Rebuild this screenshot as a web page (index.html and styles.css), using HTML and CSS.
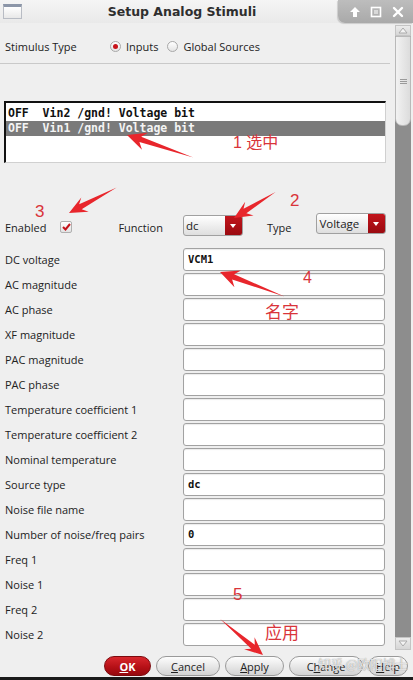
FILE: index.html
```html
<!DOCTYPE html>
<html lang="en">
<head>
  <meta charset="UTF-8" />
  <title>Setup Analog Stimuli</title>
  <link rel="stylesheet" href="styles.css">
</head>
<body>

<div class="window">
  <div class="titlebar">
    <div class="win-icon"></div>
    <div class="title">Setup Analog Stimuli</div>
    <div class="win-controls">
      <svg width="12" height="12" viewBox="0 0 12 12"><path d="M6 1 L11 6 H8 V11 H4 V6 H1 Z" fill="#fff"/></svg>
      <svg width="12" height="12" viewBox="0 0 12 12"><rect x="1.5" y="1.5" width="9" height="9" fill="none" stroke="#fff" stroke-width="1.6"/><rect x="4" y="4" width="4" height="4" fill="#fff" opacity="0.5"/></svg>
      <svg width="12" height="12" viewBox="0 0 12 12"><path d="M2 2 L10 10 M10 2 L2 10" stroke="#fff" stroke-width="2.4" stroke-linecap="round"/></svg>
    </div>
  </div>

  <div class="body">
    <div class="content">
      <div class="stim-row">
        <span class="stim-label">Stimulus Type</span>
        <span class="radio on"></span><span class="radio-text">Inputs</span>
        <span class="radio"></span><span class="radio-text">Global Sources</span>
      </div>
      <div class="sep"></div>

      <div class="list">
        <div class="list-row">OFF  Vin2 /gnd! Voltage bit</div>
        <div class="list-row sel">OFF  Vin1 /gnd! Voltage bit</div>
      </div>

      <div class="func-row">
        <span class="flabel">Enabled</span>
        <span class="check">
          <svg width="9" height="8" viewBox="0 0 9 8"><path d="M1 4 L3.5 6.5 L8 1" fill="none" stroke="#c4141c" stroke-width="2"/></svg>
        </span>
        <span class="flabel fn">Function</span>
        <span class="combo combo-dc"><span class="combo-val">dc</span><span class="combo-btn"></span></span>
        <span class="flabel ty">Type</span>
        <span class="combo combo-ty"><span class="combo-val">Voltage</span><span class="combo-btn"></span></span>
      </div>

      <div class="fields">
        <label>DC voltage</label><div class="field">VCM1</div>
        <label>AC magnitude</label><div class="field"></div>
        <label>AC phase</label><div class="field"></div>
        <label>XF magnitude</label><div class="field"></div>
        <label>PAC magnitude</label><div class="field"></div>
        <label>PAC phase</label><div class="field"></div>
        <label>Temperature coefficient 1</label><div class="field"></div>
        <label>Temperature coefficient 2</label><div class="field"></div>
        <label>Nominal temperature</label><div class="field"></div>
        <label>Source type</label><div class="field">dc</div>
        <label>Noise file name</label><div class="field"></div>
        <label>Number of noise/freq pairs</label><div class="field">0</div>
        <label>Freq 1</label><div class="field"></div>
        <label>Noise 1</label><div class="field"></div>
        <label>Freq 2</label><div class="field"></div>
        <label>Noise 2</label><div class="field"></div>
      </div>
    </div>

    <div class="scrollbar">
      <div class="sb-arrow up"><svg width="10" height="7" viewBox="0 0 10 7"><path d="M1 6 L5 1 L9 6 Z" fill="#f4f4f4" stroke="#aaa"/></svg></div>
      <div class="sb-thumb"><span></span><span></span><span></span></div>
      <div class="sb-track"></div>
      <div class="sb-arrow down"><svg width="10" height="7" viewBox="0 0 10 7"><path d="M1 1 L5 6 L9 1 Z" fill="#f4f4f4" stroke="#aaa"/></svg></div>
    </div>
  </div>

  <div class="footer">
    <button class="btn ok"><u>O</u>K</button>
    <button class="btn"><u>C</u>ancel</button>
    <button class="btn"><u>A</u>pply</button>
    <button class="btn">C<u>h</u>ange</button>
    <button class="btn"><u>H</u>elp</button>
  </div>
  <div class="bottom-edge"></div>

  <!-- red annotations drawn over the dialog -->
  <svg class="arrows" width="413" height="680" viewBox="0 0 413 680">
    <g fill="#e8262c">
      <path transform="translate(127 135) rotate(199.2)" d="M0 0 L-19 -9 L-14 -2.5 L-70 0.5 L-14 3 L-19 9 Z"/>
      <path transform="translate(234 218) rotate(148.6)" d="M0 0 L-18 -8 L-13 -2.5 L-49 0.5 L-13 3 L-18 8 Z"/>
      <path transform="translate(69 213) rotate(152.5)" d="M0 0 L-18 -8 L-13 -2.5 L-54 0.5 L-13 3 L-18 8 Z"/>
      <path transform="translate(220 272) rotate(201.3)" d="M0 0 L-19 -9 L-14 -2.5 L-69 0.5 L-14 3 L-19 9 Z"/>
      <path transform="translate(263 655) rotate(40.6)" d="M0 0 L-18 -8 L-13 -2.5 L-56 0.5 L-13 3 L-18 8 Z"/>
    </g>
  </svg>
  <span class="note n1">1 选中</span>
  <span class="note n2">2</span>
  <span class="note n3">3</span>
  <span class="note n4">4</span>
  <span class="note n5">名字</span>
  <span class="note n6">5</span>
  <span class="note n7">应用</span>
  <span class="watermark">知乎 @欧阳博士</span>
</div>

</body>
</html>
```

FILE: styles.css
```css
* {
  margin: 0;
  padding: 0;
  box-sizing: border-box;
}

body {
  width: 413px;
  height: 680px;
  overflow: hidden;
  background: #efefef;
  font-family: 'Open Sans', 'Noto Sans CJK SC', sans-serif;
  font-size: 11px;
  color: #222;
}

.window {
  position: relative;
  width: 413px;
  height: 680px;
  display: flex;
  flex-direction: column;
  background: #efefef;
}

/* title bar */
.titlebar {
  height: 23px;
  display: flex;
  align-items: stretch;
  background: linear-gradient(#f5f5f5, #e9e9e9);
}

.win-icon {
  width: 19px;
  height: 15px;
  margin: 4px 4px 0 3px;
  border: 1px solid #b8bcc4;
  border-top: 3px solid #8c96a8;
  background: linear-gradient(#ffffff, #e8e8e8);
}

.title {
  flex: 1;
  text-align: center;
  font-family: 'DejaVu Sans', sans-serif;
  font-weight: bold;
  font-size: 12.5px;
  line-height: 24px;
  color: #2e2e2e;
}

.win-controls {
  width: 75px;
  display: flex;
  align-items: center;
  justify-content: space-around;
  padding: 0 4px 0 6px;
  background: linear-gradient(#bdbdbd, #a9a9a9);
  border-bottom-left-radius: 7px;
  box-shadow: -1px 1px 1px rgba(0,0,0,0.15);
}

/* main area */
.body {
  height: 628px;
  display: flex;
}

.content {
  flex: 1;
  padding-top: 12px;
  overflow: hidden;
}

.stim-row {
  height: 22px;
  display: flex;
  align-items: center;
  padding-left: 5px;
}

.stim-label {
  width: 105px;
}

.radio {
  width: 11px;
  height: 11px;
  border-radius: 50%;
  border: 1px solid #a8a8a8;
  background: linear-gradient(#ffffff, #e4e4e4);
  position: relative;
}

.radio.on::after {
  content: "";
  position: absolute;
  left: 2px;
  top: 2px;
  width: 5px;
  height: 5px;
  border-radius: 50%;
  background: #c8141b;
}

.radio-text {
  margin: 0 9px 0 5px;
}

.sep {
  height: 1px;
  margin-top: 6px;
  margin-right: 3px;
  background: #c9c9c9;
}

.list {
  height: 62px;
  margin: 37px 7px 0 4px;
  padding-top: 3px;
  background: #fff;
  border-top: 2px solid #111;
  border-left: 2px solid #111;
  border-right: 1px solid #d0d0d0;
  border-bottom: 1px solid #d0d0d0;
}

.list-row {
  height: 15px;
  line-height: 15px;
  padding-left: 2px;
  white-space: pre;
  font-family: 'DejaVu Sans Mono', monospace;
  font-weight: bold;
  font-size: 11.5px;
  color: #111;
}

.list-row.sel {
  background: #7a7a7a;
  color: #f4f4f4;
}

.func-row {
  height: 24px;
  margin-top: 49px;
  display: flex;
  align-items: center;
  padding-left: 5px;
}

.flabel {
  padding-top: 7px;
}

.check {
  width: 12px;
  height: 12px;
  margin: 0 0 0 14px;
  border: 1px solid #b0b0b0;
  border-radius: 2px;
  background: linear-gradient(#ffffff, #e2e2e2);
  display: flex;
  align-items: center;
  justify-content: center;
  position: relative;
  top: 3px;
}

.fn {
  margin-left: 46px;
}

.combo {
  height: 21px;
  display: flex;
  border: 1px solid #a0a0a0;
  border-radius: 3px;
  background: linear-gradient(#ffffff, #dedede);
  overflow: hidden;
}

.combo-dc {
  width: 60px;
  margin-left: 20px;
  position: relative;
  top: 1px;
}

.combo-ty {
  width: 70px;
  margin-left: 25px;
  position: relative;
  top: -1px;
}

.combo-val {
  flex: 1;
  padding: 1px 0 0 2px;
  font-size: 11.5px;
  line-height: 17px;
}

.combo-btn {
  width: 17px;
  background: linear-gradient(#c2151c, #9a0a10);
  position: relative;
}

.combo-btn::after {
  content: "";
  position: absolute;
  left: 5px;
  top: 8px;
  border-left: 3.5px solid transparent;
  border-right: 3.5px solid transparent;
  border-top: 4px solid #fff;
}

.ty {
  margin-left: 24px;
}

.fields {
  margin-top: 12px;
  padding-left: 5px;
  display: grid;
  grid-template-columns: 178px 202px;
  grid-auto-rows: 23px;
  row-gap: 2px;
}

.fields label {
  display: flex;
  align-items: center;
}

.field {
  border: 1px solid #a2a2a2;
  border-radius: 3px;
  background: #fff;
  box-shadow: inset 0 1px 1px rgba(0,0,0,0.08);
  padding: 0 0 0 4px;
  font-family: 'DejaVu Sans Mono', monospace;
  font-weight: bold;
  font-size: 10.5px;
  line-height: 21px;
  color: #111;
}

/* scrollbar */
.scrollbar {
  width: 16px;
  margin: 2px 2px 1px 2px;
  display: flex;
  flex-direction: column;
  background: #8d8d8d;
}

.sb-arrow {
  height: 11px;
  background: linear-gradient(#ececec, #d6d6d6);
  border: 1px solid #c4c4c4;
  display: flex;
  align-items: center;
  justify-content: center;
}

.sb-arrow.down {
  height: 13px;
}

.sb-thumb {
  height: 90px;
  background: linear-gradient(90deg, #f2f2f2, #dcdcdc);
  border: 1px solid #b9b9b9;
  border-radius: 0 0 7px 7px;
  display: flex;
  flex-direction: column;
  align-items: center;
  justify-content: center;
  gap: 1px;
}

.sb-thumb span {
  width: 7px;
  height: 1px;
  background: #9a9a9a;
}

.sb-track {
  flex: 1;
}

/* buttons */
.footer {
  height: 26px;
  display: flex;
  justify-content: flex-end;
  align-items: flex-start;
  gap: 5px;
  padding: 5px 5px 0 0;
}

.btn {
  height: 20px;
  padding: 0 14px;
  border: 1px solid #9a9a9a;
  border-radius: 10px;
  background: linear-gradient(#fdfdfd, #e6e6e6 55%, #d2d2d2);
  font-family: 'Open Sans', sans-serif;
  font-size: 11px;
  color: #222;
}

.btn:nth-child(2) { width: 64px; }
.btn:nth-child(3) { width: 59px; }
.btn:nth-child(4) { width: 74px; }
.btn:nth-child(5) { width: 40px; padding: 0; }

.btn.ok {
  width: 47px;
  border-color: #7d0a0e;
  background: linear-gradient(#d8272d, #b30f15 60%, #960a0f);
  color: #fff;
  font-weight: bold;
}

.bottom-edge {
  flex: 1;
  background: #1a1a1a;
}

/* annotations */
.arrows {
  position: absolute;
  left: 0;
  top: 0;
  pointer-events: none;
}

.note {
  position: absolute;
  font-family: 'Liberation Sans', 'Noto Sans CJK SC', sans-serif;
  color: #d9343a;
  font-size: 17px;
  line-height: 18px;
}

.n1 { left: 233px; top: 134px; font-size: 16px; }
.n2 { left: 290px; top: 192px; }
.n3 { left: 35px; top: 203px; }
.n4 { left: 303px; top: 269px; font-size: 16px; }
.n5 { left: 265px; top: 304px; }
.n6 { left: 233px; top: 586px; }
.n7 { left: 265px; top: 625px; }

.watermark {
  position: absolute;
  left: 318px;
  top: 654px;
  font-family: 'Noto Sans CJK SC', sans-serif;
  font-size: 13px;
  color: rgba(255,255,255,0.75);
  text-shadow: 0 0 1px #777;
  letter-spacing: -0.5px;
}
```
